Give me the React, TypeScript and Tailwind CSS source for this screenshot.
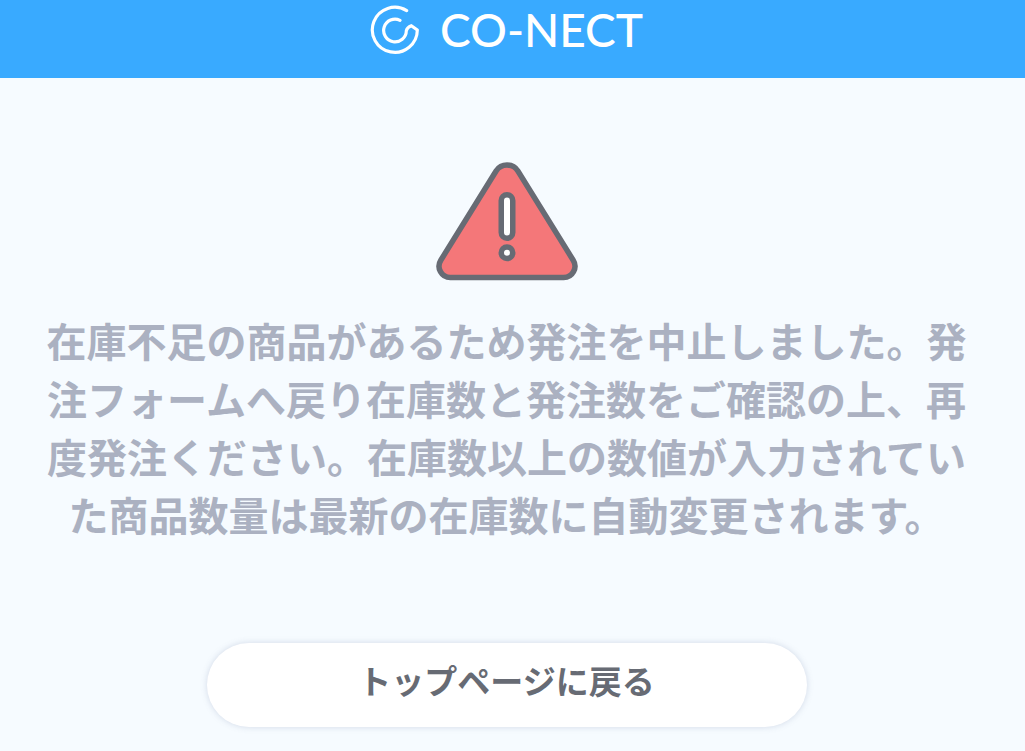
function LogoMark() {
  return (
    <svg
      viewBox="18 15 150 150"
      className="size-[50px]"
      fill="none"
      stroke="white"
      strokeWidth="9.5"
      strokeLinecap="round"
      strokeLinejoin="round"
      aria-hidden="true"
    >
      <path d="M128 32A67.500 67.500 0 1 0 160 90L142 77C134 80 129 84 127 92A34 34 0 1 1 108 61" />
    </svg>
  );
}

function WarningIcon() {
  return (
    <svg viewBox="0 0 142 119" className="w-[142px] h-[119px]" aria-hidden="true">
      <path
        d="M60.1 9A13 13 0 0 1 81.900 9L137.200 98.200A11.300 11.300 0 0 1 127.700 115.500H14.300A11.300 11.300 0 0 1 4.800 98.200Z"
        fill="#f47779"
        stroke="#676b74"
        strokeWidth="5.500"
        strokeLinejoin="round"
      />
      <rect x="65.250" y="32.750" width="11.500" height="43.500" rx="5.750" fill="white" stroke="#676b74" strokeWidth="5.500" />
      <circle cx="71" cy="90.700" r="5.750" fill="white" stroke="#676b74" strokeWidth="5.500" />
    </svg>
  );
}

export default function App() {
  return (
    <div className="min-h-screen bg-[#f6fbff] font-['Noto_Sans_CJK_JP',sans-serif]">
      {/* Brand bar */}
      <header className="flex h-[78px] justify-center bg-[#39aaff] pt-[5px] pr-3">
        <div className="flex h-[50px] items-center gap-5 text-white">
          <LogoMark />
          <span className="font-['Lato',sans-serif] text-[46px] leading-[48px] font-medium">CO-NECT</span>
        </div>
      </header>

      <main className="flex flex-col items-center pt-[84px] pr-3 pb-6">
        <WarningIcon />

        <p className="mt-[30px] px-10 text-center text-[40px] leading-[58px] font-bold text-[#abb1c1]">
          在庫不足の商品があるため発注を中止しました。発注フォームへ戻り在庫数と発注数をご確認の上、再度発注ください。在庫数以上の数値が入力されていた商品数量は最新の在庫数に自動変更されます。
        </p>

        <a
          href="#top"
          className="mt-[100px] flex h-[84px] w-full max-w-[600px] items-center justify-center rounded-full bg-white pb-2 text-[33px] font-bold text-[#676b74] shadow-[0_0_6px_rgba(103,120,160,0.25)]"
        >
          トップページに戻る
        </a>
      </main>
    </div>
  );
}
